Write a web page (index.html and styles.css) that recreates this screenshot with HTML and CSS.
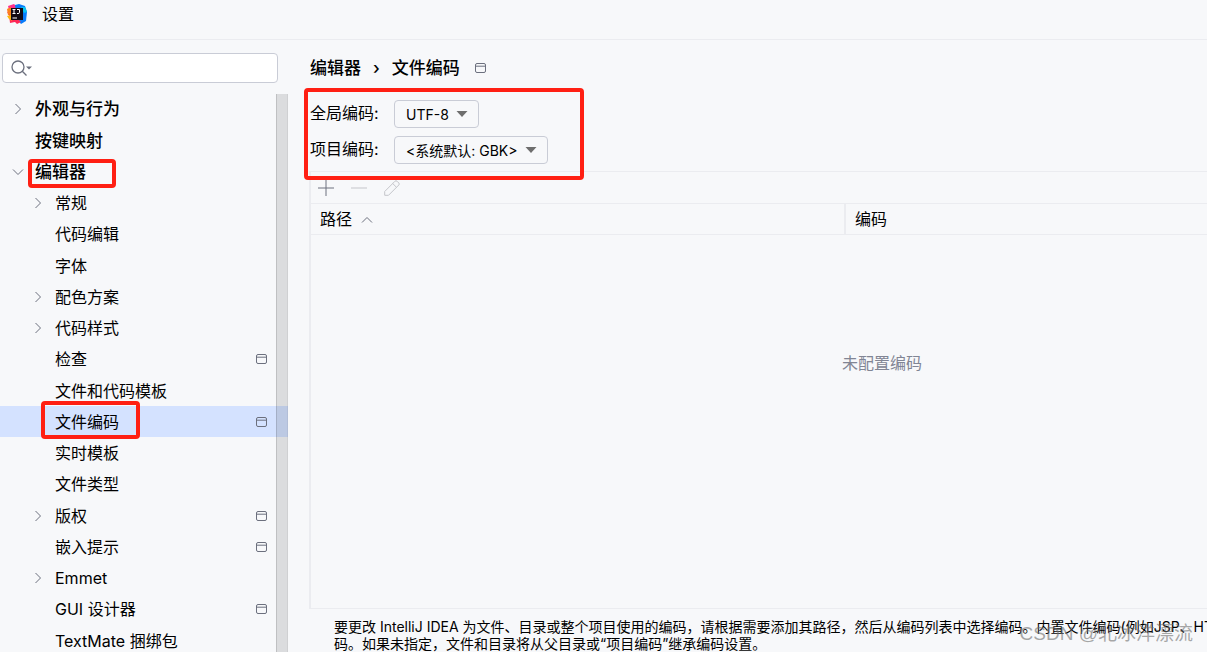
FILE: index.html
```html
<!DOCTYPE html>
<html lang="zh-CN">
<head>
    <meta charset="UTF-8">
    <meta name="viewport" content="width=device-width, initial-scale=1.0">
    <title>设置</title>
    <link rel="stylesheet" href="styles.css">
</head>
<body>

<svg class="sprite" aria-hidden="true">
  <symbol id="right" viewBox="0 0 10 12"><path d="M2.5 1L7.5 6L2.5 11"/></symbol>
  <symbol id="down" viewBox="0 0 12 10"><path d="M1 2.5L6 7.5L11 2.5"/></symbol>
  <symbol id="up" viewBox="0 0 12 10"><path d="M1 7.5L6 2.5L11 7.5"/></symbol>
  <symbol id="project" viewBox="0 0 12 12"><rect x="1" y="1.5" width="10" height="9" rx="1.5"/><path d="M1 4.2H11"/></symbol>
  <symbol id="caret" viewBox="0 0 12 8"><path d="M0.5 1H11.5L6 7Z"/></symbol>
</svg>

<header class="titlebar">
  <svg class="logo" viewBox="0 0 20 20">
    <path d="M1 2L7 0L10 3L6 11L0 9L2 6Z" fill="#ff318c"/>
    <path d="M0 5L4 3V12L1 11Z" fill="#fc801d"/>
    <path d="M8 1L12 0L18 2L20 8L19 17L14 20L10 15Z" fill="#087cfa"/>
    <path d="M14 3L18 3L20 8L17 9Z" fill="#07c3f2"/>
    <path d="M2 10L5 14L12 16L14 18L10 20L8 18L3 19Z" fill="#fe2857"/>
    <path d="M0 12L4 11L5 17L2 15Z" fill="#fdb60d"/>
    <rect x="4" y="4" width="12" height="12" fill="#120b14"/>
    <path d="M5.5 5.5H8.5M7 5.5V9.5M5.5 9.5H8.5M10 5.5H12.5V8.5Q12.5 9.5 11 9.5H10M5.5 14H10" fill="none" stroke="#fff"/>
  </svg>
  <h1>设置</h1>
</header>

<div class="settings">
  <aside class="sidebar">
    <label class="search">
      <svg viewBox="0 0 22 18">
        <circle cx="7" cy="8" r="6"/>
        <path d="M11.3 12.3L15.5 16.5"/>
        <path class="solid" d="M15 7.5H21L18 10.5Z"/>
      </svg>
      <input type="text" aria-label="搜索">
    </label>

    <nav class="tree-wrap">
      <ul class="tree">
        <li class="top"><svg class="arrow"><use href="#right"/></svg><a href="#">外观与行为</a></li>
        <li class="top"><span class="arrow"></span><a href="#">按键映射</a></li>
        <li class="top marked"><svg class="arrow open"><use href="#down"/></svg><a href="#">编辑器</a><span class="mark mark-editor"></span></li>
        <li><svg class="arrow"><use href="#right"/></svg><a href="#">常规</a></li>
        <li><span class="arrow"></span><a href="#">代码编辑</a></li>
        <li><span class="arrow"></span><a href="#">字体</a></li>
        <li><svg class="arrow"><use href="#right"/></svg><a href="#">配色方案</a></li>
        <li><svg class="arrow"><use href="#right"/></svg><a href="#">代码样式</a></li>
        <li><span class="arrow"></span><a href="#">检查</a><svg class="project"><use href="#project"/></svg></li>
        <li><span class="arrow"></span><a href="#">文件和代码模板</a></li>
        <li class="selected marked"><span class="arrow"></span><a href="#">文件编码</a><svg class="project"><use href="#project"/></svg><span class="mark mark-encoding"></span></li>
        <li><span class="arrow"></span><a href="#">实时模板</a></li>
        <li><span class="arrow"></span><a href="#">文件类型</a></li>
        <li><svg class="arrow"><use href="#right"/></svg><a href="#">版权</a><svg class="project"><use href="#project"/></svg></li>
        <li><span class="arrow"></span><a href="#">嵌入提示</a><svg class="project"><use href="#project"/></svg></li>
        <li><svg class="arrow"><use href="#right"/></svg><a href="#">Emmet</a></li>
        <li><span class="arrow"></span><a href="#">GUI 设计器</a><svg class="project"><use href="#project"/></svg></li>
        <li><span class="arrow"></span><a href="#">TextMate 捆绑包</a></li>
      </ul>
      <div class="scrollbar"></div>
    </nav>
  </aside>

  <main class="content">
    <div class="breadcrumb">
      <a href="#">编辑器</a>
      <span>›</span>
      <a href="#">文件编码</a>
      <svg class="project"><use href="#project"/></svg>
    </div>

    <form class="encodings">
      <label for="global">全局编码:</label>
      <div class="select">
        <select id="global"><option>UTF-8</option></select>
        <svg><use href="#caret"/></svg>
      </div>
      <label for="project-enc">项目编码:</label>
      <div class="select wide">
        <select id="project-enc"><option>&lt;系统默认: GBK&gt;</option></select>
        <svg><use href="#caret"/></svg>
      </div>
      <span class="mark mark-form"></span>
    </form>

    <section class="panel">
      <div class="toolbar">
        <button type="button" aria-label="添加"><svg viewBox="0 0 16 16"><path d="M8 0V16M0 8H16"/></svg></button>
        <button type="button" aria-label="移除" disabled><svg viewBox="0 0 16 16"><path d="M0 8H16"/></svg></button>
        <button type="button" aria-label="编辑" disabled><svg viewBox="0 0 16 16"><path d="M0.7 15.3V11.5L11 1.2Q12 0.2 13 1.2L14.8 3Q15.8 4 14.8 5L4.5 15.3ZM8.7 3.5L12.5 7.3"/></svg></button>
      </div>
      <table>
        <thead>
          <tr>
            <th class="path">路径 <svg><use href="#up"/></svg></th>
            <th>编码</th>
          </tr>
        </thead>
      </table>
      <p class="empty">未配置编码</p>
    </section>

    <p class="hint">要更改 IntelliJ IDEA 为文件、目录或整个项目使用的编码，请根据需要添加其路径，然后从编码列表中选择编码。内置文件编码(例如JSP、HTML<br>码。如果未指定，文件和目录将从父目录或“项目编码”继承编码设置。</p>
  </main>
</div>

<div class="watermark">CSDN @北冰洋漂流</div>

</body>
</html>
```

FILE: styles.css
```css
* {
  box-sizing: border-box;
}

body {
  margin: 0;
  height: 100vh;
  overflow: hidden;
  display: flex;
  flex-direction: column;
  background: #f7f8fa;
  color: #000;
  font-family: Inter, "Noto Sans CJK SC", sans-serif;
  font-size: 16px;
  line-height: 20px;
}

a {
  color: inherit;
  text-decoration: none;
}

svg {
  fill: none;
  stroke: #6c707e;
  flex: none;
}

.sprite {
  position: absolute;
  width: 0;
  height: 0;
}

/* title bar */
.titlebar {
  height: 40px;
  flex: none;
  display: flex;
  align-items: flex-start;
  gap: 15px;
  padding: 4px 7px;
  border-bottom: 1px solid #ebecf0;
}

.titlebar h1 {
  margin: 0;
  font-size: 16px;
  font-weight: 400;
}

.logo {
  width: 20px;
  height: 20px;
  stroke: none;
}

.settings {
  flex: 1;
  min-height: 0;
  display: flex;
  overflow: hidden;
}

/* sidebar */
.sidebar {
  width: 288px;
  flex: none;
  display: flex;
  flex-direction: column;
  padding-top: 13px;
}

.search {
  height: 30px;
  flex: none;
  display: flex;
  align-items: center;
  gap: 4px;
  margin: 0 10px 10px 2px;
  padding: 0 8px;
  background: #fff;
  border: 1px solid #c9ccd6;
  border-radius: 4px;
}

.search svg {
  width: 22px;
  height: 18px;
  stroke-width: 1.3;
}

.search .solid {
  fill: #6c707e;
  stroke: none;
}

.search input {
  flex: 1;
  min-width: 0;
  border: none;
  outline: none;
  background: none;
  font: inherit;
}

.tree-wrap {
  position: relative;
  flex: 1;
  min-height: 0;
}

.tree {
  height: 100%;
  overflow: hidden;
  margin: 0;
  padding: 0;
  list-style: none;
}

.tree li {
  height: 31px;
  display: flex;
  align-items: center;
  gap: 12px;
  padding-left: 33px;
  padding-right: 20px;
}

.tree li:nth-child(4n+1) {
  height: 32px;
}

.tree li.top {
  padding-left: 13px;
  font-size: 17px;
  font-weight: 500;
}

.tree li.selected {
  background: #d4e2ff;
}

.tree a {
  flex: 1;
}

.arrow {
  width: 10px;
  height: 12px;
}

.arrow.open {
  width: 12px;
  height: 10px;
  margin-left: -1px;
  margin-right: -1px;
}

.project {
  width: 13px;
  height: 12px;
}

.scrollbar {
  position: absolute;
  top: 1px;
  right: 0;
  bottom: 0;
  width: 12px;
  background: rgba(0, 0, 0, 0.11);
  border-left: 1px solid rgba(0, 0, 0, 0.12);
  border-right: 1px solid rgba(0, 0, 0, 0.05);
}

/* red frames round the important settings */
.marked, .encodings {
  position: relative;
}

.mark {
  position: absolute;
  border: 4px solid #ff1f13;
  border-radius: 4px;
  pointer-events: none;
}

.mark-editor {
  left: 28px;
  top: 3px;
  width: 88px;
  height: 29px;
}

.mark-encoding {
  left: 41px;
  top: -5px;
  width: 99px;
  height: 38px;
}

.mark-form {
  left: -6px;
  top: -12px;
  width: 280px;
  height: 92px;
}

/* content */
.content {
  flex: 1;
  min-width: 1166px;
  display: flex;
  flex-direction: column;
  padding-left: 22px;
}

.breadcrumb {
  display: flex;
  align-items: center;
  gap: 12px;
  height: 20px;
  margin: 18px 0 22px;
  font-size: 17px;
  font-weight: 500;
}

.breadcrumb .project {
  margin-left: 2px;
}

.encodings {
  display: grid;
  grid-template-columns: 84px auto;
  grid-auto-rows: 28px;
  justify-content: start;
  align-items: center;
  row-gap: 8px;
  margin-bottom: 7px;
}

.encodings label {
  padding-bottom: 2px;
}

.select {
  position: relative;
  width: 85px;
}

.select.wide {
  width: 154px;
}

.select select {
  display: block;
  width: 100%;
  height: 28px;
  padding: 0 11px;
  appearance: none;
  background: transparent;
  border: 1px solid #c9ccd6;
  border-radius: 4px;
  color: #000;
  font-family: inherit;
  font-size: 14px;
}

.select svg {
  position: absolute;
  right: 11px;
  top: 10px;
  width: 12px;
  height: 8px;
  fill: #6e6e6e;
  stroke: none;
  pointer-events: none;
}

.panel {
  flex: 1;
  display: flex;
  flex-direction: column;
  margin-left: -1px;
  border: 1px solid #ebecf0;
  border-left-width: 2px;
}

.toolbar {
  display: flex;
  align-items: center;
  gap: 17px;
  height: 31px;
  padding-left: 7px;
}

.toolbar button {
  width: 16px;
  height: 16px;
  padding: 0;
  border: none;
  background: none;
}

.toolbar svg {
  display: block;
  width: 16px;
  height: 16px;
}

.toolbar button:disabled svg {
  stroke: #c4c5ca;
}

table {
  width: 100%;
  table-layout: fixed;
  border-collapse: collapse;
}

th {
  height: 31px;
  padding: 0 9px;
  border-top: 1px solid #ebecf0;
  border-bottom: 1px solid #ebecf0;
  font-weight: 400;
  text-align: left;
}

th.path {
  width: 534px;
  border-right: 2px solid #ebecf0;
}

th svg {
  width: 12px;
  height: 10px;
  margin-left: 4px;
}

.empty {
  margin: 118px 0 0;
  color: #818594;
  text-align: center;
}

.hint {
  height: 43px;
  margin: 0;
  padding: 9px 0 0 24px;
  font-size: 14px;
  line-height: 17px;
  white-space: nowrap;
}

.watermark {
  position: absolute;
  right: 14px;
  bottom: 8px;
  color: rgba(110, 110, 110, 0.6);
  font-family: "Liberation Sans", "Noto Sans CJK SC", sans-serif;
  font-size: 19px;
}
```
